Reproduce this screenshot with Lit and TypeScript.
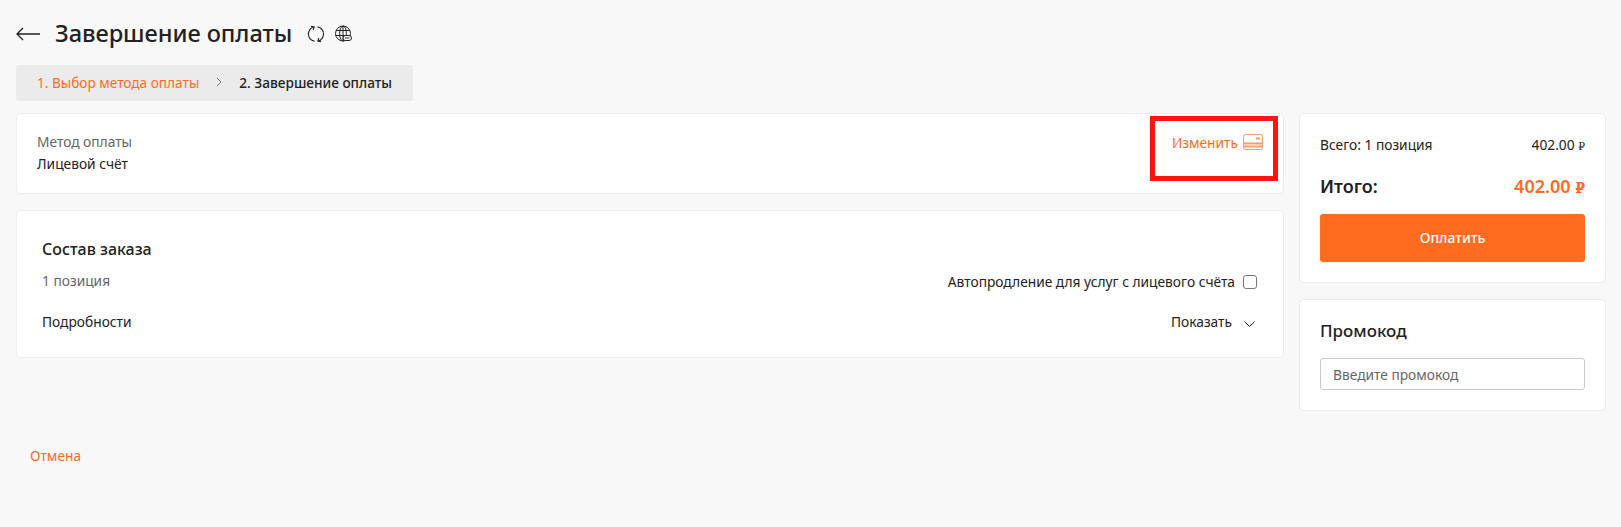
import { LitElement, html, css } from "lit";
import { customElement } from "lit/decorators.js";

@customElement("app-root")
export class AppRoot extends LitElement {
  static styles = css`
    :host {
      display: block;
      min-height: 527px;
      background: #f8f8f8;
      color: #222;
      font-family: "Noto Sans", sans-serif;
      font-size: 13.75px;
      box-sizing: border-box;
      padding: 16px 16px 0;
    }
    * { box-sizing: border-box; }
    .head { display: flex; align-items: center; height: 36px; }
    .back { width: 24px; height: 14px; margin-right: 15px; display: block; }
    h1 { margin: 0 0 2px; font-size: 23.6px; line-height: 36px; font-weight: 500; letter-spacing: -0.06px; }
    .hicons { display: flex; gap: 9px; margin-left: 15px; align-items: center; }
    .hicons svg { display: block; width: 18px; height: 18px; }
    .crumbs {
      margin-top: 13px; display: inline-flex; align-items: center; height: 36px; width: 397px;
      background: #ebebeb; border-radius: 3px; padding: 0 0 2px 21px; font-size: 13.65px;
    }
    .crumbs .a { color: #ff6b1f; }
    .crumbs svg { margin: 0 17px 0 17px; display: block; }
    .crumbs .b { font-weight: 500; }
    .cols { margin-top: 12px; display: grid; grid-template-columns: 1268px 307px; gap: 15px; }
    .col { display: flex; flex-direction: column; gap: 16px; }
    .card { background: #fff; border: 1px solid #ececec; border-radius: 5px; }
    .method { height: 81px; padding: 17px 20px; display: flex; justify-content: space-between; position: relative; }
    .muted { color: #666; }
    .method .l { line-height: 22px; }
    .change { display: flex; align-items: center; gap: 5px; color: #ff6b1f; height: 22px; }
    .redbox { position: absolute; left: 1133px; top: 2px; width: 128px; height: 65px; border: 5px solid #ff1414; }
    .order { height: 148px; padding: 26px 25px 0; }
    .order h2 { margin: 0; font-size: 16px; line-height: 24px; font-weight: 500; }
    .row { display: flex; justify-content: space-between; align-items: center; line-height: 22px; }
    .r1 { margin-top: 9px; height: 22px; }
    .r2 { margin-top: 19px; }
    .auto { display: flex; align-items: center; gap: 8px; margin-top: 2px; }
    .box { width: 14px; height: 14px; border: 1px solid #777; border-radius: 3px; background: #fff; margin-right: 1px; }
    .show { display: flex; align-items: center; gap: 12px; margin-right: 3px; }
    .show svg { display: block; margin-top: 4px; }
    .sum { height: 170px; padding: 20px 20px 0; }
    .rub { font-family: "DejaVu Serif", serif; font-size: 0.78em; line-height: 1; }
    .total { margin-top: 16px; height: 28px; display: flex; justify-content: space-between; align-items: center; line-height: 28px; font-size: 18px; font-weight: 600; }
    .total .v { color: #ff6b1f; }
    .pay {
      margin-top: 14px; height: 48px; background: #ff6b1f; color: #fff; border-radius: 3px; padding-bottom: 1px;
      display: flex; align-items: center; justify-content: center; font-weight: 500; font-size: 14px;
    }
    .sum .row { height: 22px; }
    .promo { height: 112px; padding: 19px 20px 0; }
    .promo h2 { margin: 0; font-size: 17px; line-height: 24px; font-weight: 500; }
    .input {
      margin-top: 15px; height: 32px; border: 1px solid #ccc; border-radius: 3px; padding: 0 12px;
      display: flex; align-items: center; color: #666; background: #fff;
    }
    .cancel { margin-top: 71px; margin-left: 14px; color: #ff6b1f; line-height: 22px; }
  `;

  render() {
    return html`
      <div class="head">
        <svg class="back" viewBox="0 0 24 14" fill="none" stroke="#222" stroke-width="1.3">
          <path d="M24 7H1M7 1L1 7l6 6" />
        </svg>
        <h1>Завершение оплаты</h1>
        <div class="hicons">
          <svg viewBox="0 0 18 18" fill="none" stroke="#222" stroke-width="1.1">
            <path d="M1.6 10.6A7.4 7.4 0 0 1 7 1.8" />
            <path d="M10.5 1.9A7.4 7.4 0 0 1 16.4 7.4" />
            <path d="M16.4 7.4A7.4 7.4 0 0 1 11 16.2" />
            <path d="M7.5 16.1A7.4 7.4 0 0 1 1.6 10.6" />
            <path d="M4 1.2L7.2 1.9 6.2 5M14 16.8L10.8 16.1 11.8 13" />
          </svg>
          <svg viewBox="0 0 18 18" fill="none" stroke="#222" stroke-width="1">
            <circle cx="9" cy="8.5" r="7.5" />
            <ellipse cx="9" cy="8.5" rx="3.4" ry="7.5" />
            <path d="M9 1v15M2 5.5h14M1.5 10.5h15" />
            <rect x="9" y="10.5" width="8.5" height="5" rx="2.5" fill="#fff" />
            <path d="M11 13h4.5" />
          </svg>
        </div>
      </div>
      <div class="crumbs">
        <span class="a">1. Выбор метода оплаты</span>
        <svg width="6" height="10" viewBox="0 0 6 10" fill="none" stroke="#777" stroke-width="1"><path d="M1 1l4 4-4 4" /></svg>
        <span class="b">2. Завершение оплаты</span>
      </div>
      <div class="cols">
        <div class="col">
          <div class="card method">
            <div class="l">
              <div class="muted">Метод оплаты</div>
              <div>Лицевой счёт</div>
            </div>
            <div class="change">
              Изменить
              <svg width="20" height="16" viewBox="0 0 20 16" fill="none" stroke="#ff9a63" stroke-width="1">
                <rect x="0.5" y="0.5" width="19" height="15" rx="2" />
                <path d="M1 9.5h18M1 12.5h18" stroke-width="2" />
                <path d="M13 4.5h4" stroke-width="2" />
              </svg>
            </div>
            <div class="redbox"></div>
          </div>
          <div class="card order">
            <h2>Состав заказа</h2>
            <div class="row r1">
              <span class="muted">1 позиция</span>
              <span class="auto">Автопродление для услуг с лицевого счёта <span class="box"></span></span>
            </div>
            <div class="row r2">
              <span>Подробности</span>
              <span class="show">Показать
                <svg width="11" height="6" viewBox="0 0 11 6" fill="none" stroke="#222" stroke-width="1"><path d="M.4.6L5.5 5.4 10.6.6" /></svg>
              </span>
            </div>
          </div>
          <div class="cancel">Отмена</div>
        </div>
        <div class="col">
          <div class="card sum">
            <div class="row"><span>Всего: 1 позиция</span><span>402.00 <span class="rub">₽</span></span></div>
            <div class="total"><span>Итого:</span><span class="v">402.00 <span class="rub">₽</span></span></div>
            <div class="pay">Оплатить</div>
          </div>
          <div class="card promo">
            <h2>Промокод</h2>
            <div class="input">Введите промокод</div>
          </div>
        </div>
      </div>
    `;
  }
}
